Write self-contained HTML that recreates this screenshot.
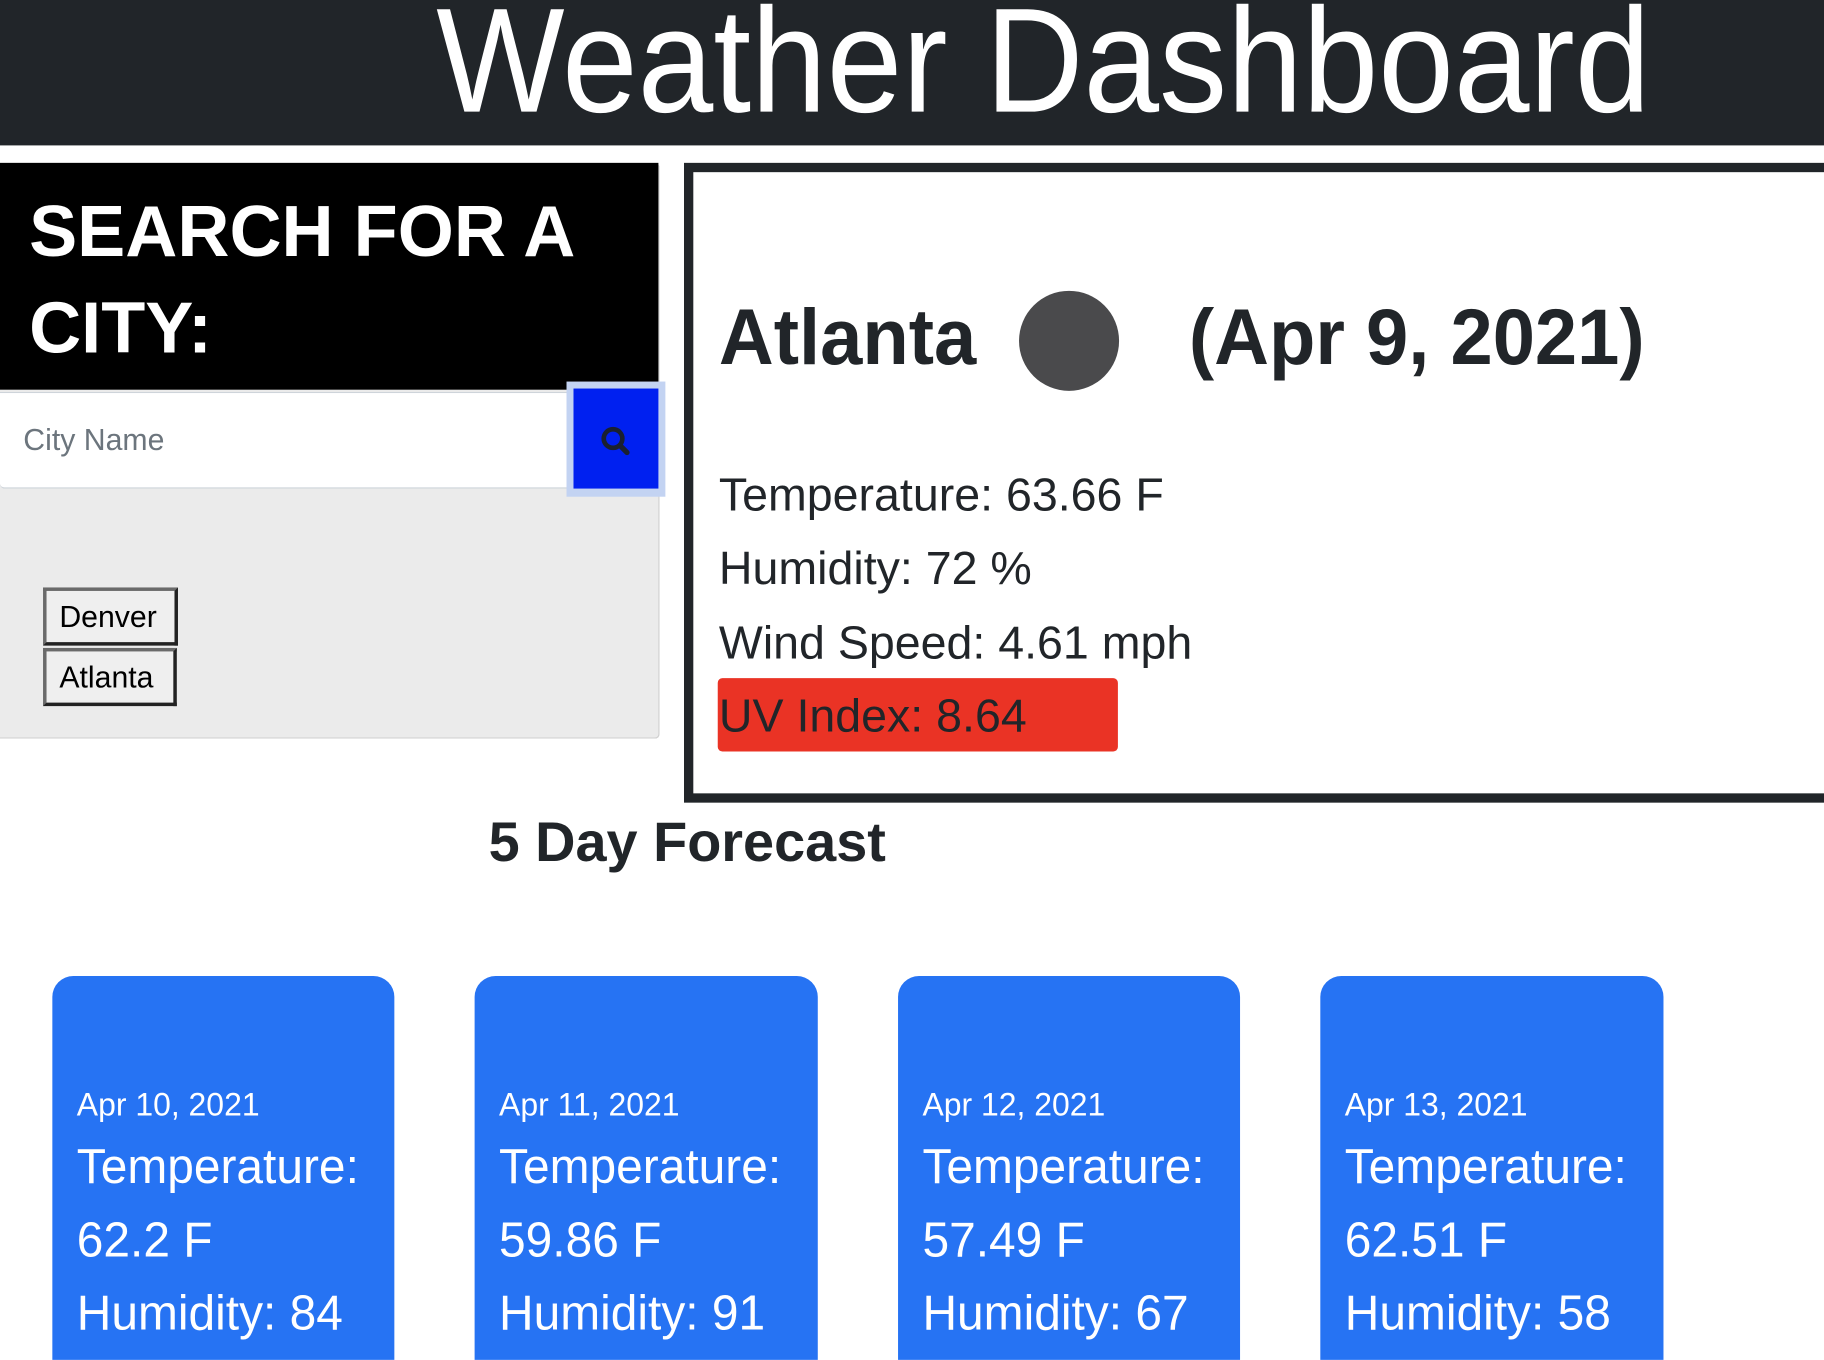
<!DOCTYPE html>
<html><head><meta charset="utf-8"><style>
html,body{margin:0;padding:0;width:1824px;height:1352px;overflow:hidden;background:#fff;font-family:"Liberation Sans",Arial,sans-serif}
#w{position:absolute;left:0;top:0;width:1568px;height:1162px;transform:scale(1.16327);transform-origin:0 0}
.a{position:absolute;white-space:nowrap}
.hdr{left:0;top:0;width:1568px;height:125px;background:#212529}
.title{left:375px;top:-22px;color:#fff;font-size:128px;line-height:150px;transform:scaleX(0.913);transform-origin:0 0}
.lp{left:0;top:140px;width:567px;height:495px;background:#ebebeb;border:1px solid #cfcfcf;border-left:none;border-radius:0 4px 4px 0;box-sizing:border-box}
.blk{left:0;top:140px;width:566px;height:195px;background:#000;color:#fff;font-weight:bold;font-size:62px;line-height:83px;padding:18px 0 0 25px;box-sizing:border-box}
.inp{left:0;top:337px;width:493px;height:83px;background:#fff;border:1px solid #ced4da;border-left:none;box-sizing:border-box;border-radius:0 0 0 4px}
.ph{left:20px;top:363px;font-size:26px;color:#6c757d}
.ring{left:487px;top:328px;width:85px;height:99px;background:#c3d3f2}
.btn{left:493px;top:334px;width:73px;height:86px;background:#0020f0}
.cb{background:#efefef;border:3px solid #222;border-top-color:#6a6a6a;border-left-color:#6a6a6a;font-size:26px;color:#000;box-sizing:border-box;padding:7px 0 0 11px}
.rp{left:588px;top:140px;width:1000px;height:550px;border:8px solid #212529;box-sizing:border-box}
.dk{color:#212529}
.bd{transform:scaleX(0.96);transform-origin:0 0}
.card{background:#2673f3;border-radius:18px 18px 0 0;top:839px;height:330px;color:#fff}
.card div{position:absolute;left:21px;white-space:nowrap;transform:scaleX(0.98);transform-origin:0 0}
</style></head><body><div id="w">
<div class="a hdr"></div>
<div class="a title">Weather Dashboard</div>

<div class="a lp"></div>
<div class="a blk">SEARCH FOR A<br>CITY:</div>
<div class="a inp"></div>
<div class="a ph">City Name</div>
<div class="a ring"></div>
<div class="a btn"></div>
<svg class="a" style="left:514px;top:364px" width="32" height="32" viewBox="0 0 32 32"><circle cx="13" cy="13" r="8" fill="none" stroke="#1a2030" stroke-width="4"/><line x1="19" y1="19" x2="25" y2="25" stroke="#1a2030" stroke-width="4.5" stroke-linecap="round"/></svg>
<div class="a cb" style="left:37px;top:505px;width:116px;height:50px">Denver</div>
<div class="a cb" style="left:37px;top:557px;width:115px;height:50px">Atlanta</div>

<div class="a rp"></div>
<div class="a dk bd" style="left:618px;top:250px;font-size:68px;font-weight:bold;line-height:80px">Atlanta</div>
<div class="a" style="left:876px;top:250px;width:86px;height:86px;border-radius:50%;background:#4a4a4c"></div>
<div class="a dk bd" style="left:1022px;top:250px;font-size:68px;font-weight:bold;line-height:80px">(Apr 9, 2021)</div>
<div class="a dk" style="left:618px;top:402px;font-size:40px;line-height:48px">Temperature: 63.66 F</div>
<div class="a dk" style="left:618px;top:465px;font-size:40px;line-height:48px">Humidity: 72 %</div>
<div class="a dk" style="left:618px;top:529px;font-size:40px;line-height:48px">Wind Speed: 4.61 mph</div>
<div class="a" style="left:617px;top:583px;width:344px;height:63px;background:#ea3325;border-radius:4px"></div>
<div class="a dk" style="left:618px;top:592px;font-size:40px;line-height:48px">UV Index: 8.64</div>

<div class="a dk" style="left:420px;top:695px;font-size:48px;font-weight:bold;line-height:60px">5 Day Forecast</div>

<div class="a card" style="left:45px;width:294px"><div style="top:95px;font-size:28px">Apr 10, 2021</div><div style="top:140px;font-size:42px">Temperature:</div><div style="top:203px;font-size:42px">62.2 F</div><div style="top:266px;font-size:42px">Humidity: 84</div></div>
<div class="a card" style="left:408px;width:295px"><div style="top:95px;font-size:28px">Apr 11, 2021</div><div style="top:140px;font-size:42px">Temperature:</div><div style="top:203px;font-size:42px">59.86 F</div><div style="top:266px;font-size:42px">Humidity: 91</div></div>
<div class="a card" style="left:772px;width:294px"><div style="top:95px;font-size:28px">Apr 12, 2021</div><div style="top:140px;font-size:42px">Temperature:</div><div style="top:203px;font-size:42px">57.49 F</div><div style="top:266px;font-size:42px">Humidity: 67</div></div>
<div class="a card" style="left:1135px;width:295px"><div style="top:95px;font-size:28px">Apr 13, 2021</div><div style="top:140px;font-size:42px">Temperature:</div><div style="top:203px;font-size:42px">62.51 F</div><div style="top:266px;font-size:42px">Humidity: 58</div></div>
</div></body></html>
